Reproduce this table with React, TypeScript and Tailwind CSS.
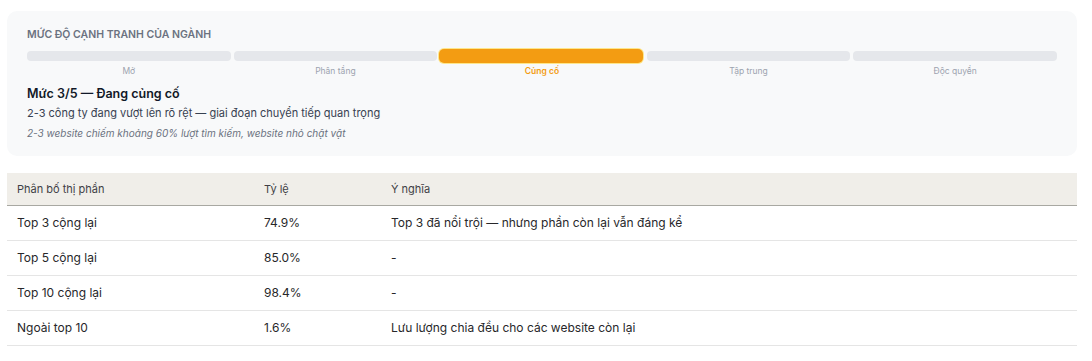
import React from 'react'

const steps = ['Mở', 'Phân tầng', 'Củng cố', 'Tập trung', 'Độc quyền']
const activeIndex = 2

const rows = [
  { label: 'Top 3 cộng lại', value: '74.9%', note: 'Top 3 đã nổi trội — nhưng phần còn lại vẫn đáng kể' },
  { label: 'Top 5 cộng lại', value: '85.0%', note: '-' },
  { label: 'Top 10 cộng lại', value: '98.4%', note: '-' },
  { label: 'Ngoài top 10', value: '1.6%', note: 'Lưu lượng chia đều cho các website còn lại' },
]

const App = () => {
  return (
    <div className="min-h-screen bg-white pl-[7px] pr-[15px] pt-[11px] font-['Inter',sans-serif] text-[#1f2937]">
      {/* --- Competition level card --- */}
      <div className="rounded-[10px] bg-[#f8f9fa] px-5 pt-4 pb-[15px]">
        <div className="text-[10.5px] leading-4 font-semibold uppercase text-[#6b7280]">
          Mức độ cạnh tranh của ngành
        </div>

        <div className="mt-[6px] flex gap-[3px]">
          {steps.map((step, i) => (
            <div key={step} className="flex flex-1 flex-col">
              <div className="flex h-[14px] items-center">
                {i === activeIndex ? (
                  <div className="-mx-[1px] h-[14px] w-full rounded-[5px] bg-[#f39c12] ring-1 ring-[#fde68a]" />
                ) : (
                  <div className="h-[10px] w-full rounded-[4px] bg-[#e5e7eb]" />
                )}
              </div>
              <div
                className={
                  i === activeIndex
                    ? 'mt-[2px] text-center text-[8.5px] leading-[12px] font-semibold text-[#f39c12]'
                    : 'mt-[2px] text-center text-[8.5px] leading-[12px] text-[#9ca3af]'
                }
              >
                {step}
              </div>
            </div>
          ))}
        </div>

        <div className="mt-[7px] text-[12.5px] leading-5 font-semibold text-[#111827]">Mức 3/5 — Đang củng cố</div>
        <div className="text-[11px] leading-[18px] text-[#374151]">
          2-3 công ty đang vượt lên rõ rệt — giai đoạn chuyển tiếp quan trọng
        </div>
        <div className="mt-[3px] text-[10px] leading-4 italic text-[#6b7280]">
          2-3 website chiếm khoảng 60% lượt tìm kiếm, website nhỏ chật vật
        </div>
      </div>

      {/* --- Market share table --- */}
      <table className="mt-[17px] w-full border-collapse text-left text-[12px]">
        <thead>
          <tr className="border-b border-[#a8a8a2] bg-[#f0eee9]">
            <th className="h-[32px] w-[247px] px-[10px] text-[11px] font-normal text-[#3f3f46]">Phân bố thị phần</th>
            <th className="h-[32px] w-[127px] px-[10px] text-[11px] font-normal text-[#3f3f46]">Tỷ lệ</th>
            <th className="h-[32px] px-[10px] text-[11px] font-normal text-[#3f3f46]">Ý nghĩa</th>
          </tr>
        </thead>
        <tbody>
          {rows.map((row) => (
            <tr key={row.label} className="border-b border-[#e5e5e5]">
              <td className="h-[35px] px-[10px] text-[#27272a]">{row.label}</td>
              <td className="h-[35px] px-[10px] text-[#27272a]">{row.value}</td>
              <td className="h-[35px] px-[10px] text-[#27272a]">{row.note}</td>
            </tr>
          ))}
        </tbody>
      </table>
    </div>
  )
}

export default App
